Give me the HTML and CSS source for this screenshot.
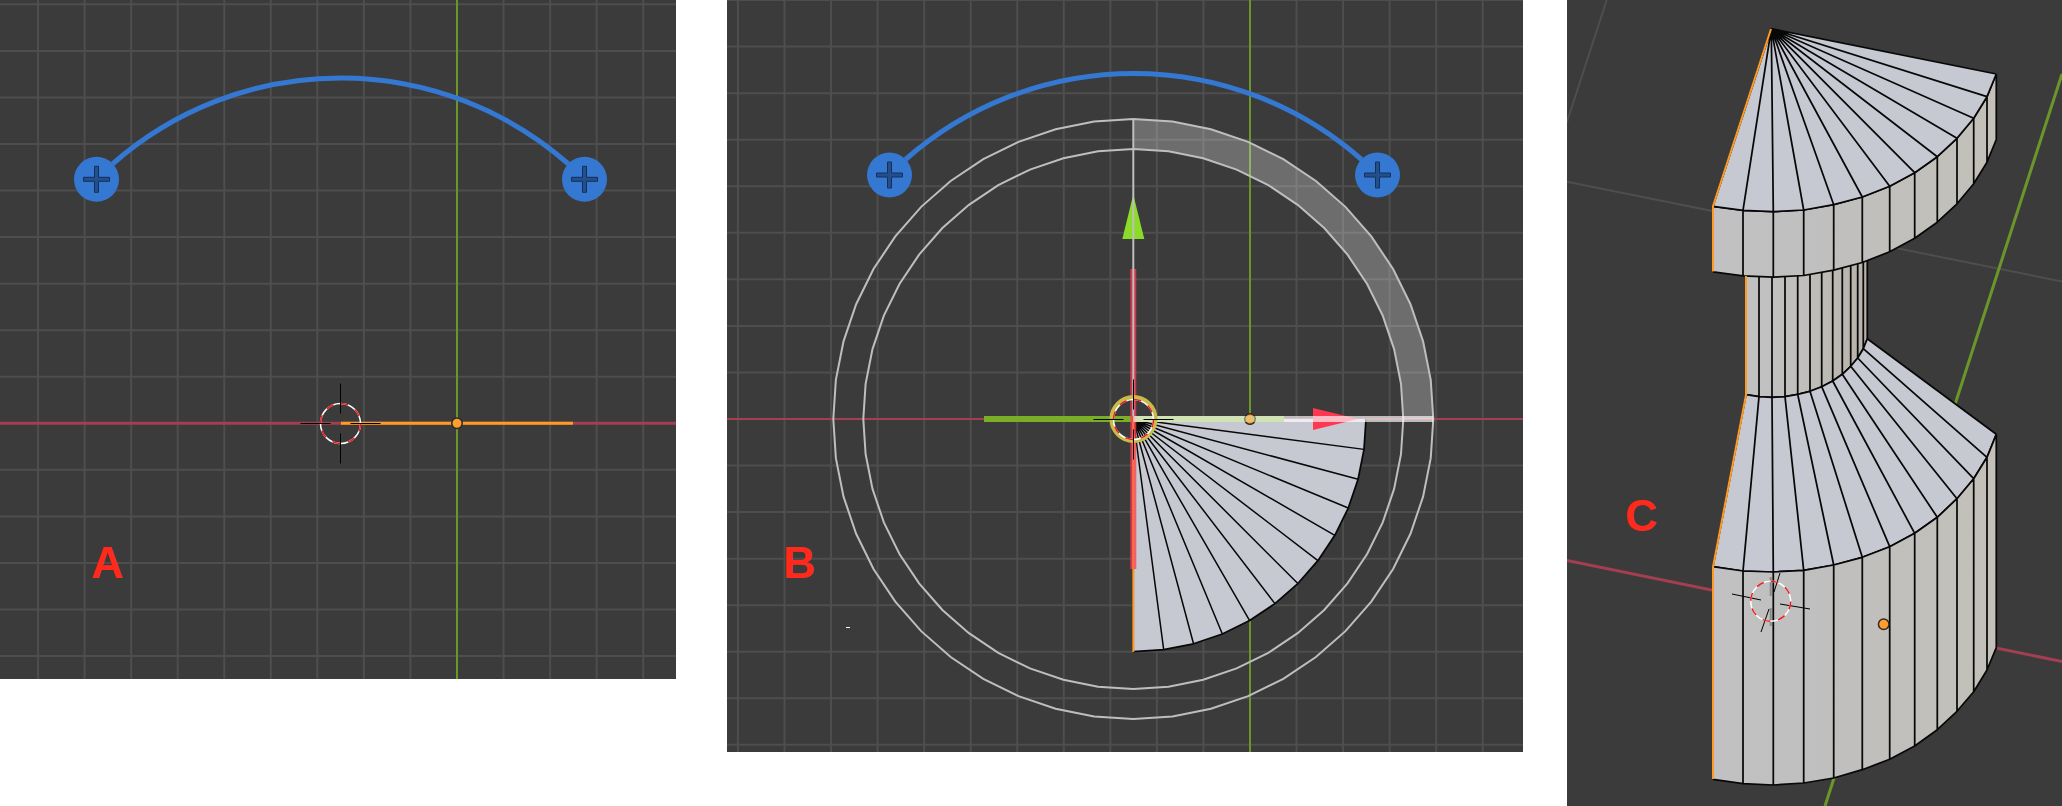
FILE: index.html
```html
<!DOCTYPE html>
<html lang="en">
<head>
<meta charset="utf-8">
<title>Spin tool steps</title>
<link rel="stylesheet" href="styles.css">
</head>
<body>
<svg class="defs" aria-hidden="true">
  <defs>
    <g id="handle">
      <circle class="handle-disc" r="22.5"/>
      <path class="handle-plus" d="M-2-13H2V-2H13V2H2V13H-2V2H-13V-2H-2Z"/>
    </g>
    <g id="ring">
      <circle class="ring-white" r="20"/>
      <circle class="ring-red" r="20" transform="rotate(-90)"/>
    </g>
    <path id="cross" class="cross" d="M0-40V-10M0 10V40M-40 0H-10M10 0H40"/>
    <g id="origin">
      <circle class="origin-dot" r="5.25"/>
    </g>
    <linearGradient id="side" x1="146" x2="429" y1="0" y2="0" gradientUnits="userSpaceOnUse">
      <stop offset="0" stop-color="#c1c1c3"/>
      <stop offset="0.45" stop-color="#c0bfbe"/>
      <stop offset="1" stop-color="#c2c0b8"/>
    </linearGradient>
    <linearGradient id="neck" x1="179" x2="300" y1="0" y2="0" gradientUnits="userSpaceOnUse">
      <stop offset="0" stop-color="#c1c1c3"/>
      <stop offset="0.45" stop-color="#c0bfbd"/>
      <stop offset="1" stop-color="#b7b2a9"/>
    </linearGradient>
  </defs>
</svg>
<main class="steps">
  <figure class="step step-a">
    <svg class="view" viewBox="0 0 676 679" role="img" aria-label="Edge before the spin">
      <path class="grid" id="grid-a"/>
      <path class="axis-x wide" d="M0 423.3H676"/>
      <path class="axis-y" d="M457 0V679"/>
      <path class="selected-edge" d="M341 423.3H573"/>
      <path class="arc" d="M112.5 164A345 345 0 0 1 568.5 164"/>
      <use href="#handle" x="96.5" y="179.3"/>
      <use href="#handle" x="584.5" y="179.3"/>
      <use href="#ring" x="340.5" y="423.5"/>
      <use href="#cross" x="340.5" y="423.5"/>
      <use href="#origin" x="457" y="423.3"/>
      <text class="label" x="91" y="578">A</text>
    </svg>
  </figure>
  <figure class="step step-b">
    <svg class="view" viewBox="727 0 796 752" role="img" aria-label="Spin of ninety degrees">
      <path class="grid" id="grid-b"/>
      <path class="axis-x" d="M727 419H1523"/>
      <path class="axis-y" d="M1250 0V752"/>
      <path class="top-face" id="fan"/>
      <path class="edges thin" id="fan-edges"/>
      <path class="edges" id="fan-rim"/>
      <path class="selected-edge thin" d="M1133.3 419V652"/>
      <use href="#origin" x="1250" y="419"/>
      <path class="arc" d="M905.5 159.5A345 345 0 0 1 1361.5 159.5"/>
      <use href="#handle" x="889.5" y="175"/>
      <use href="#handle" x="1377.5" y="175"/>
      <path class="sweep" id="sweep"/>
      <path class="green-bar" d="M984 419H1284"/>
      <path class="red-bar" d="M1133.3 269V569"/>
      <path class="red-core" d="M1133.3 422V569"/>
      <path class="green-arrow" d="M1133.3 194.5L1144.3 239H1122.3Z"/>
      <path class="red-arrow" d="M1358 419L1313 408V430Z"/>
      <path class="dial" id="dial-outer"/>
      <path class="dial" id="dial-inner"/>
      <path class="dial" d="M1133.3 119V416"/>
      <path class="white-bar" d="M1133.3 419H1433.3"/>
      <use href="#origin" class="veiled" x="1250" y="419"/>
      <circle class="yellow-ring" cx="1133.5" cy="419" r="22"/>
      <use href="#ring" x="1133.5" y="419.5"/>
      <use href="#cross" x="1133.5" y="419.5"/>
      <path class="tick" d="M846 627.5H850"/>
      <text class="label" x="783" y="578">B</text>
    </svg>
  </figure>
  <figure class="step step-c">
    <svg class="view" viewBox="0 0 495 806" role="img" aria-label="Profile after the spin">
      <path class="grid" d="M39.7 0L0 122M0 181.7L495 281.5"/>
      <path class="axis-x wide" d="M0 560.5L495 661.5"/>
      <path class="axis-y wide" d="M495 74L258 806"/>
      <g id="solid"></g>
      <path class="selected-edge thin" d="M204 29L146 206V271.5M179 276V394.7L146 566.7V779"/>
      <path class="cross faint" d="M203.7 577V596M203.7 608V626"/>
      <path class="cross" d="M165 594L194 600M213 604L243 609M213 573L207 592M202 609L194 632"/>
      <use href="#ring" x="203.7" y="601.3"/>
      <use href="#origin" x="316.7" y="624.3"/>
      <text class="label" x="58" y="531">C</text>
    </svg>
  </figure>
</main>
<script src="scene.js"></script>
</body>
</html>
```
FILE: styles.css
```css
body {
  margin: 0;
  background: #ffffff;
  font-family: "Liberation Sans", Arial, sans-serif;
}

.defs {
  position: absolute;
  width: 0;
  height: 0;
}

.steps {
  display: flex;
  align-items: flex-start;
}

.step {
  margin: 0;
  min-width: 0;
}

.step-a {
  flex: 676 1 0;
  margin-right: 51px;
}

.step-b {
  flex: 796 1 0;
  margin-right: 44px;
}

.step-c {
  flex: 495 1 0;
}

.view {
  display: block;
  width: 100%;
  height: auto;
  background: #3b3b3b;
}

.view path {
  fill: none;
}

.grid {
  stroke: #4e4e4e;
  stroke-width: 2;
}

.axis-x {
  stroke: #a33f50;
  stroke-width: 2;
}

.axis-y {
  stroke: #6b962a;
  stroke-width: 2;
}

.axis-x.wide,
.axis-y.wide {
  stroke-width: 3;
}

.selected-edge {
  stroke: #ff9b23;
  stroke-width: 3;
  stroke-linejoin: round;
}

.selected-edge.thin {
  stroke-width: 2;
}

.arc {
  stroke: #3478d2;
  stroke-width: 5;
}

.handle-disc {
  fill: #3478d2;
}

#handle .handle-plus {
  fill: #23508c;
  stroke: #14305a;
  stroke-width: 1;
}

.ring-white,
.ring-red {
  fill: none;
  stroke: #ffffff;
  stroke-width: 1.5;
}

.ring-red {
  stroke: #e81e23;
  stroke-dasharray: 7.854;
}

.cross {
  stroke: #000000;
  stroke-width: 1;
}

.cross.faint {
  stroke: #8a8a8a;
  stroke-width: 2;
}

.origin-dot {
  fill: #ff9e2c;
  stroke: #2b2b2b;
  stroke-width: 1.5;
}

.veiled {
  opacity: 0.5;
}

.view .top-face {
  fill: #c6c9d2;
}

.view .side-face {
  fill: url(#side);
}

.view .neck-face {
  fill: url(#neck);
}

.edges {
  stroke: #080808;
  stroke-width: 1.75;
  stroke-linejoin: round;
}

.edges.thin {
  stroke-width: 1.5;
}

.view .sweep {
  fill: rgba(255, 255, 255, 0.26);
}

.dial {
  stroke: #bebebe;
  stroke-width: 2;
}

.green-bar {
  stroke: #7aae27;
  stroke-width: 6;
}

.red-bar {
  stroke: #ff3852;
  stroke-opacity: 0.75;
  stroke-width: 6;
}

.red-core {
  stroke: #ff7040;
  stroke-width: 2;
}

.white-bar {
  stroke: #ffffff;
  stroke-opacity: 0.66;
  stroke-width: 6;
}

.view .green-arrow {
  fill: #8adc28;
}

.view .red-arrow {
  fill: #ff3852;
}

.yellow-ring {
  fill: none;
  stroke: #c8bc44;
  stroke-width: 4;
}

.tick {
  stroke: #ffffff;
  stroke-width: 1;
}

.label {
  fill: #ff2a1c;
  font-size: 45px;
  font-weight: 700;
}
```
FILE: scene.js
```js
const STEP = 46.55;

function setPath(id, d) {
  document.getElementById(id).setAttribute("d", d);
}

function drawGrid(id, left, right, height, originX, originY) {
  let d = "";
  for (let k = -12; k <= 12; k++) {
    const x = originX + k * STEP;
    const y = originY + k * STEP;
    if (k !== 0 && x > left && x < right) d += `M${x} 0V${height}`;
    if (k !== 0 && y > -1 && y < height) d += `M${left} ${y}H${right}`;
  }
  setPath(id, d);
}

drawGrid("grid-a", 0, 676, 679, 457, 423.3);
drawGrid("grid-b", 727, 1523, 752, 1250, 419);

const CX = 1133.3;
const CY = 419;

/* Points of a 48-sided circle; index 0 is the top, going clockwise. */
function ringPoints(radius, from, to) {
  const points = [];
  for (let i = from; i <= to; i++) {
    const angle = (i * Math.PI) / 24;
    points.push([CX + radius * Math.sin(angle), CY - radius * Math.cos(angle)]);
  }
  return points;
}

const line = (points) => "M" + points.map((p) => p.join(" ")).join("L");

setPath("dial-outer", line(ringPoints(300, 0, 48)) + "Z");
setPath("dial-inner", line(ringPoints(270, 0, 48)) + "Z");
setPath("sweep", line([...ringPoints(300, 0, 12), ...ringPoints(270, 0, 12).reverse()]) + "Z");

const rim = ringPoints(232.7, 12, 24);
setPath("fan", line([[CX, CY], ...rim]) + "Z");
setPath("fan-rim", line(rim));
setPath("fan-edges", rim.slice(1).map((p) => line([[CX, CY], p])).join(""));

/* Profile rings of the finished solid. */
const zip = (xs, ys) => xs.map((x, i) => [x, ys[i]]);
const outerX = [146, 176, 206.3, 236.7, 266.7, 295.3, 322.7, 347.7, 370.3, 390, 406.7, 420, 429.3];
const neckX = [179, 192, 205, 218, 230.7, 243, 254.7, 265.7, 275.3, 283.7, 290.7, 296.3, 300.3];
const capTop = zip(outerX, [206.3, 210.3, 211.7, 210, 204.7, 197, 186.3, 172.7, 156.7, 138.3, 118.3, 96.7, 74]);
const capLow = capTop.map(([x, y]) => [x, y + 65.5]);
const neckLow = zip(neckX, [394.7, 396.7, 397.3, 396.7, 394.3, 391.3, 386.7, 381, 374.3, 366.3, 358, 348.7, 338.7]);
const neckTop = neckLow.map(([x]) => [x, 250]);
const baseTop = zip(outerX, [566.7, 571, 572, 570.3, 565, 557.3, 546.7, 533.3, 517.3, 498.7, 478.7, 457.3, 434.3]);
const baseLow = zip(outerX, [779.3, 783.7, 785, 783, 778, 769.7, 759.3, 746, 729.7, 711.3, 691.7, 670, 647.7]);
const apex = outerX.map(() => [204.3, 28.7]);

function band(a, b, className) {
  const face = line([...a, ...[...b].reverse()]) + "Z";
  const ribs = a.map((p, i) => line([p, b[i]])).join("");
  return `<path class="${className}" d="${face}"/><path class="edges" d="${line(a)}${line(b)}${ribs}"/>`;
}

document.getElementById("solid").innerHTML =
  band(neckTop, neckLow, "neck-face") +
  band(neckLow, baseTop, "top-face") +
  band(baseTop, baseLow, "side-face") +
  band(capTop, capLow, "side-face") +
  band(apex, capTop, "top-face");
```
